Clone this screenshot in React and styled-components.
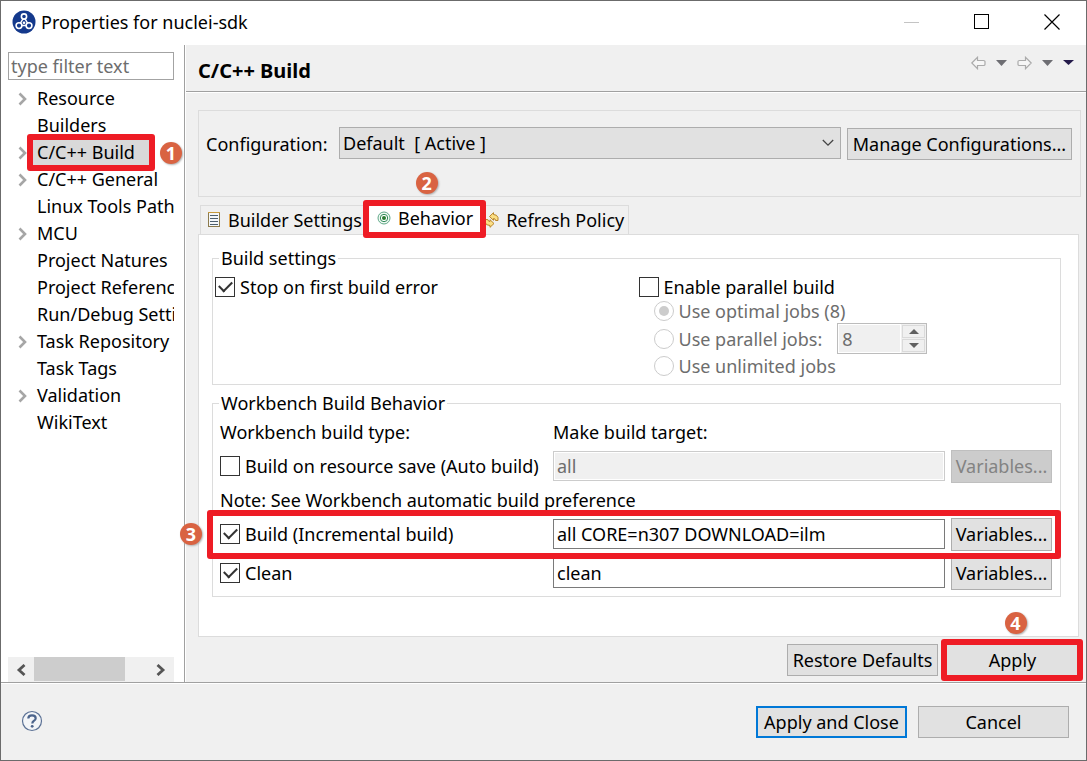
import React from "react";
import styled, { createGlobalStyle, css } from "styled-components";

const Global = createGlobalStyle`
  *, *::before, *::after { box-sizing: border-box; }
  body { margin: 0; background: #f0f0f0; }
  body, button, input, select {
    font-family: "Noto Sans", "Open Sans", sans-serif;
    font-size: 18px;
    line-height: 24px;
    color: #000;
  }
`;

const Window = styled.div`
  display: flex;
  flex-direction: column;
  min-height: 100vh;
  border: 1px solid #6b6b6b;
  background: #f0f0f0;
`;

const TitleBar = styled.header`
  display: flex;
  align-items: center;
  height: 44px;
  padding: 0 26px 2px 11px;
  background: #fff;
`;

const WindowTitle = styled.h1`
  flex: 1;
  margin: 0 0 0 5px;
  font-size: 18px;
  font-weight: 400;
  line-height: 24px;
`;

const WindowControls = styled.div`
  display: flex;
  gap: 54px;
`;

const IconButton = styled.button`
  display: flex;
  align-items: center;
  justify-content: center;
  padding: 0;
  border: 0;
  background: none;
`;

const Body = styled.div`
  display: flex;
  flex: 1;
  border-bottom: 1px solid #a0a0a0;
`;

const Sidebar = styled.nav`
  display: flex;
  flex-direction: column;
  flex: none;
  width: 184px;
  padding: 7px 10px 0 7px;
  border-right: 1px solid #a0a0a0;
  background: #fff;
`;

const FilterInput = styled.input`
  width: 100%;
  height: 28px;
  margin-bottom: 5px;
  padding: 0 2px;
  border: 1px solid #a3a3a3;
  &::placeholder { color: #6d6d6d; opacity: 1; }
`;

const Tree = styled.ul`
  flex: 1;
  margin: 0;
  padding: 0;
  list-style: none;
`;

const TreeItem = styled.li`
  display: flex;
  align-items: center;
  height: 27px;
`;

const TreeArrow = styled.span`
  display: flex;
  flex: none;
  width: 25px;
  padding-left: 9px;
`;

const TreeLink = styled.a`
  display: block;
  flex: 1;
  min-width: 0;
  padding: 1px ${(p) => (p.$selected ? 14 : 0)}px 2px 4px;
  overflow: hidden;
  white-space: nowrap;
  color: #000;
  text-decoration: none;
  background: ${(p) => (p.$selected ? "#d9d9d9" : "transparent")};
`;

const ScrollBar = styled.div`
  display: flex;
  align-items: center;
  height: 25px;
  padding: 0 8px;
  background: #f0f0f0;
`;

const ScrollTrack = styled.div`
  flex: 1;
  height: 100%;
  padding-right: 31px;
  margin-left: 8px;
`;

const ScrollThumb = styled.div`
  height: 24px;
  background: #cdcdcd;
`;

/* Annotation frame and its numbered badge, drawn over the control they mark. */
const Marked = styled.div`
  position: relative;
  &::after {
    content: "";
    position: absolute;
    z-index: 2;
    inset: ${(p) => p.$inset};
    border: 6px solid #ee1c25;
    border-radius: 3px;
    pointer-events: none;
  }
`;

const Badge = styled.span`
  position: absolute;
  z-index: 3;
  display: flex;
  align-items: center;
  justify-content: center;
  width: 22px;
  height: 22px;
  border-radius: 50%;
  background: #d96342;
  box-shadow: 1px 1px 2px #b0b0b0;
  color: #fff;
  font-size: 18px;
  font-weight: 700;
  line-height: 22px;
  ${(p) => p.$place}
`;

const besideRight = css`left: calc(100% + 11px); top: 3px;`;
const above = css`left: calc(50% - 8px); top: -34px;`;
const besideLeft = css`left: -40px; top: 6px;`;
const aboveButton = css`left: calc(50% - 8px); top: -32px;`;

const Page = styled.main`
  display: flex;
  flex: 1;
  flex-direction: column;
  min-width: 0;
  border-left: 1px solid #fff;
`;

const PageHeader = styled.div`
  display: flex;
  align-items: center;
  height: 47px;
  padding: 5px 12px 0 12px;
  border-bottom: 1px solid #a0a0a0;
  box-shadow: 0 1px #fff;
`;

const PageTitle = styled.h2`
  flex: 1;
  margin: 0;
  font-size: 20px;
  font-weight: 700;
  line-height: 24px;
`;

const History = styled.div`
  display: flex;
  gap: 10px;
  padding-bottom: 16px;
`;

const PageContent = styled.div`
  display: flex;
  flex: 1;
  flex-direction: column;
  padding: 18px 5px 6px 12px;
`;

const ConfigBox = styled.div`
  display: flex;
  gap: 6px;
  height: 87px;
  padding: 16px 8px 0 7px;
  border: 1px solid #dcdcdc;
`;

const ConfigLabel = styled.label`
  flex: none;
  width: 127px;
  padding-top: 5px;
  white-space: nowrap;
`;

const SelectWrap = styled.div`
  position: relative;
  flex: 1;
  min-width: 0;
  svg {
    position: absolute;
    right: 7px;
    top: 12px;
    pointer-events: none;
  }
`;

const Select = styled.select`
  appearance: none;
  width: 100%;
  height: 32px;
  padding: 0 28px 0 3px;
  border: 1px solid #adadad;
  border-radius: 0;
  background: #e1e1e1;
`;

const Button = styled.button`
  flex: none;
  width: ${(p) => p.$width}px;
  height: ${(p) => p.$height || 32}px;
  padding: 0;
  border: ${(p) => (p.$primary ? "2px solid #0078d7" : "1px solid #adadad")};
  background: #e1e1e1;
  white-space: nowrap;
  &:disabled {
    border-color: #bfbfbf;
    background: #ccc;
    color: #838383;
  }
`;

const ConfigButton = styled(Button)`
  margin-top: 1px;
`;

const Tabs = styled.div`
  display: flex;
  align-self: flex-start;
  height: 29px;
  margin: 8px 0 0 2px;
  border: 1px solid #dcdcdc;
  border-bottom: 0;
`;

const Tab = styled.button`
  display: flex;
  align-items: center;
  gap: 7px;
  height: ${(p) => (p.$active ? 32 : 28)}px;
  padding: ${(p) => p.$pad};
  border: 0;
  background: ${(p) => (p.$active ? "#fff" : "none")};
  white-space: nowrap;
`;

const TabPanel = styled.section`
  flex: 1;
  padding: 9px 17px 0 13px;
  margin-right: 2px;
  border: 1px solid #dcdcdc;
  background: #fff;
`;

const Group = styled.fieldset`
  min-width: 0;
  margin: 0 0 4px;
  padding: ${(p) => p.$pad};
  border: 1px solid #dcdcdc;
`;

const Legend = styled.legend`
  height: 28px;
  margin-left: ${(p) => p.$indent}px;
  padding: 0 2px;
  line-height: 28px;
`;

const SettingsGrid = styled.div`
  display: grid;
  grid-template-columns: 1fr 1fr;
`;

const ParallelOptions = styled.div`
  padding-left: 2px;
`;

const OptionRow = styled.div`
  display: flex;
  align-items: center;
  height: ${(p) => p.$height}px;
  padding-left: ${(p) => p.$indent || 0}px;
`;

const Choice = styled.label`
  display: flex;
  align-items: center;
  gap: 5px;
  white-space: nowrap;
  color: ${(p) => (p.$disabled ? "#6d6d6d" : "#000")};
`;

const CheckBox = styled.input.attrs({ type: "checkbox" })`
  appearance: none;
  position: relative;
  flex: none;
  width: 20px;
  height: 20px;
  margin: 0;
  border: 1px solid #333;
  background: #fff;
  &:checked::before {
    content: "";
    position: absolute;
    left: 3px;
    top: 3px;
    width: 13px;
    height: 8px;
    border: solid #333;
    border-width: 0 0 2px 2px;
    transform: rotate(-45deg);
  }
`;

const Radio = styled.input.attrs({ type: "radio" })`
  appearance: none;
  display: flex;
  flex: none;
  align-items: center;
  justify-content: center;
  width: 20px;
  height: 20px;
  margin: 0;
  border: 1px solid #ccc;
  border-radius: 50%;
  background: #fff;
  &:checked::before {
    content: "";
    width: 10px;
    height: 10px;
    border-radius: 50%;
    background: #ccc;
  }
`;

const Spinner = styled.div`
  display: flex;
  width: 90px;
  height: 31px;
  margin-left: 15px;
  border: 1px solid #bcbcbc;
  background: #f0f0f0;
`;

const SpinnerInput = styled.input`
  flex: 1;
  min-width: 0;
  padding: 0 3px;
  border: 1px solid #fff;
  background: #f0f0f0;
  color: #6d6d6d;
`;

const SpinnerButtons = styled.div`
  display: flex;
  flex-direction: column;
  gap: 1px;
  width: 25px;
  padding: 1px;
`;

const SpinnerButton = styled(IconButton)`
  flex: 1;
  border: 1px solid #dadada;
`;

const Field = styled.input.attrs({ type: "text" })`
  flex: 1;
  min-width: 0;
  height: 30px;
  padding: 0 3px;
  border: 1px solid #7a7a7a;
  background: #fff;
  &:disabled {
    border-color: #ccc;
    background: #f0f0f0;
    box-shadow: inset 0 0 0 1px #fff;
    color: #6d6d6d;
  }
`;

const BuildRow = styled.div`
  display: flex;
  align-items: center;
  height: 34px;
  gap: 6px;
`;

const BuildName = styled.div`
  flex: none;
  width: 327px;
  white-space: nowrap;
`;

const BuildHeader = styled(BuildRow)`
  height: 30px;
  margin-bottom: 2px;
`;

const CleanRow = styled(BuildRow)`
  margin-top: 5px;
`;

const PageActions = styled.div`
  display: flex;
  justify-content: flex-end;
  gap: 6px;
  padding-top: 7px;
`;

const Footer = styled.footer`
  display: flex;
  gap: 11px;
  height: 77px;
  padding: 22px 17px 0 20px;
  border-top: 1px solid #fff;
`;

const HelpButton = styled(IconButton)`
  width: 22px;
  height: 30px;
  margin-right: auto;
`;

const LogoIcon = () => (
  <svg width="24" height="24" viewBox="0 0 24 24" aria-hidden="true">
    <circle cx="12" cy="12" r="11.5" fill="#14398c" />
    <path d="M12 7 7.200 15.500h9.600z" fill="none" stroke="#fff" strokeWidth="1.500" />
    <g fill="#14398c" stroke="#fff" strokeWidth="1.600">
      <circle cx="12" cy="6.500" r="2.600" />
      <circle cx="7" cy="15.600" r="2.900" />
      <circle cx="17" cy="15.600" r="2.900" />
    </g>
    <circle cx="12" cy="12.800" r="1.300" fill="#fff" />
  </svg>
);

const TreeChevron = () => (
  <svg width="12" height="14" viewBox="0 0 12 14" aria-hidden="true">
    <path d="M2.5 1.5 8 7l-5.500 5.500" fill="none" stroke="#a6a6a6" strokeWidth="2.600" />
  </svg>
);

const ScrollChevron = ({ left }) => (
  <svg width="10" height="12" viewBox="0 0 10 12" aria-hidden="true">
    <path
      d={left ? "M8.500 1 3 6l5.500 5" : "M1.500 1 7 6l-5.500 5"}
      fill="none"
      stroke="#555"
      strokeWidth="2.800"
    />
  </svg>
);

const HistoryArrow = ({ back }) => (
  <svg width="15" height="14" viewBox="0 0 15 14" aria-hidden="true">
    <path
      d={
        back
          ? "M.8 7 6.500 1.300V4.500H12.500q1.500 0 1.500 1V8.500q0 1-1.500 1H6.500V12.700Z"
          : "M14.200 7 8.500 1.300V4.500H2.500Q1 4.500 1 5.500V8.500q0 1 1.500 1H8.500V12.700Z"
      }
      fill="#f6f6f6"
      stroke="#ababab"
      strokeWidth="1.200"
    />
  </svg>
);

const Caret = ({ width = 11, height = 6, color = "#6e6e73", up }) => (
  <svg width={width} height={height} viewBox="0 0 10 6" preserveAspectRatio="none" aria-hidden="true">
    <path d={up ? "M0 6h10L5 0z" : "M0 0h10L5 6z"} fill={color} />
  </svg>
);

const ListIcon = () => (
  <svg width="14" height="16" viewBox="0 0 14 16" aria-hidden="true">
    <rect x="1.500" y=".5" width="11" height="14" fill="#f4f7fa" stroke="#8c7a4c" />
    <path d="M1 .5h12" stroke="#c79a3c" />
    <path d="M3 3.500h8M3 6.500h8M3 9.500h8M3 12.500h8" stroke="#4d5f6e" />
  </svg>
);

const TargetIcon = () => (
  <svg width="14" height="14" viewBox="0 0 14 14" aria-hidden="true">
    <circle cx="7" cy="7" r="6" fill="#f2faf4" stroke="#5fa888" />
    <circle cx="7" cy="7" r="3.700" fill="#fff" stroke="#2f8a58" />
    <circle cx="7" cy="7" r="2" fill="#2a7a32" />
  </svg>
);

const RefreshIcon = () => (
  <svg width="15" height="16" viewBox="0 0 15 16" aria-hidden="true">
    <g fill="#fbdf86" stroke="#b98428" strokeWidth="1" strokeLinejoin="round">
      <path d="M5.500 4.500 9.500.7V2.500Q13 2.500 14 5.500V8.500H11.500Q11.500 6.500 9.500 6.500V8.300Z" />
      <path d="M10 11.500 6 7.700V9.500Q4 9.500 3.800 7.500H1V10Q1.500 13.500 6 13.500V15.300Z" />
    </g>
  </svg>
);

const HelpIcon = () => (
  <svg width="22" height="22" viewBox="0 0 22 22" aria-hidden="true">
    <circle cx="11" cy="11" r="9.500" fill="#f3f5f8" stroke="#5b7195" strokeWidth="1.200" />
    <path
      d="M7.300 8.500Q7.300 5.300 11 5.300T14.700 8.300Q14.700 10 12.700 11Q11.300 11.800 11.300 13.500"
      fill="none"
      stroke="#4c648c"
      strokeWidth="2.200"
    />
    <circle cx="11.200" cy="16.300" r="1.400" fill="#4c648c" />
  </svg>
);

const treeItems = [
  { name: "Resource", branch: true },
  { name: "Builders" },
  { name: "C/C++ Build", branch: true, selected: true },
  { name: "C/C++ General", branch: true },
  { name: "Linux Tools Path" },
  { name: "MCU", branch: true },
  { name: "Project Natures" },
  { name: "Project References" },
  { name: "Run/Debug Settings" },
  { name: "Task Repository", branch: true },
  { name: "Task Tags" },
  { name: "Validation", branch: true },
  { name: "WikiText" },
];

function Navigation() {
  return (
    <Sidebar aria-label="Property pages">
      <FilterInput type="text" placeholder="type filter text" aria-label="Filter" />
      <Tree>
        {treeItems.map(({ name, branch, selected }) => (
          <TreeItem key={name}>
            <TreeArrow>{branch && <TreeChevron />}</TreeArrow>
            {selected ? (
              <Marked $inset="-5px -6px -5px -6px">
                <TreeLink href="#build" $selected aria-current="page">
                  {name}
                </TreeLink>
                <Badge $place={besideRight}>1</Badge>
              </Marked>
            ) : (
              <TreeLink href="#page">{name}</TreeLink>
            )}
          </TreeItem>
        ))}
      </Tree>
      <ScrollBar>
        <ScrollChevron left />
        <ScrollTrack>
          <ScrollThumb />
        </ScrollTrack>
        <ScrollChevron />
      </ScrollBar>
    </Sidebar>
  );
}

function BuildSettings() {
  return (
    <Group $pad="3px 2px 6px">
      <Legend $indent={4}>Build settings</Legend>
      <SettingsGrid>
        <OptionRow $height={24}>
          <Choice>
            <CheckBox defaultChecked />
            Stop on first build error
          </Choice>
        </OptionRow>
        <ParallelOptions>
          <OptionRow $height={24}>
            <Choice>
              <CheckBox />
              Enable parallel build
            </Choice>
          </OptionRow>
          <OptionRow $height={24} $indent={15}>
            <Choice $disabled>
              <Radio name="jobs" defaultChecked disabled />
              Use optimal jobs (8)
            </Choice>
          </OptionRow>
          <OptionRow $height={31} $indent={15}>
            <Choice $disabled>
              <Radio name="jobs" disabled />
              Use parallel jobs:
            </Choice>
            <Spinner>
              <SpinnerInput type="text" defaultValue="8" aria-label="Parallel jobs" disabled />
              <SpinnerButtons>
                <SpinnerButton aria-label="Increase" disabled>
                  <Caret up width={10} height={5} color="#606060" />
                </SpinnerButton>
                <SpinnerButton aria-label="Decrease" disabled>
                  <Caret width={10} height={5} color="#606060" />
                </SpinnerButton>
              </SpinnerButtons>
            </Spinner>
          </OptionRow>
          <OptionRow $height={24} $indent={15}>
            <Choice $disabled>
              <Radio name="jobs" disabled />
              Use unlimited jobs
            </Choice>
          </OptionRow>
        </ParallelOptions>
      </SettingsGrid>
    </Group>
  );
}

function BuildTarget({ label, value, checked, disabled }) {
  return (
    <>
      <BuildName>
        <Choice>
          <CheckBox defaultChecked={checked} />
          {label}
        </Choice>
      </BuildName>
      <Field defaultValue={value} disabled={disabled} aria-label={`${label} target`} />
      <Button $width={101} $height={33} disabled={disabled}>
        Variables...
      </Button>
    </>
  );
}

function WorkbenchBehavior() {
  return (
    <Group $pad="0 8px 6px 7px">
      <Legend $indent={-1}>Workbench Build Behavior</Legend>
      <BuildHeader>
        <BuildName>Workbench build type:</BuildName>
        <span>Make build target:</span>
      </BuildHeader>
      <BuildRow>
        <BuildTarget label="Build on resource save (Auto build)" value="all" disabled />
      </BuildRow>
      <BuildRow>Note: See Workbench automatic build preference</BuildRow>
      <Marked $inset="-7px -9px -8px -13px">
        <BuildRow>
          <BuildTarget label="Build (Incremental build)" value="all CORE=n307 DOWNLOAD=ilm" checked />
        </BuildRow>
        <Badge $place={besideLeft}>3</Badge>
      </Marked>
      <CleanRow>
        <BuildTarget label="Clean" value="clean" checked />
      </CleanRow>
    </Group>
  );
}

export default function App() {
  return (
    <>
      <Global />
      <Window>
        <TitleBar>
          <LogoIcon />
          <WindowTitle>Properties for nuclei-sdk</WindowTitle>
          <WindowControls>
            <IconButton aria-label="Minimize">
              <svg width="16" height="16" viewBox="0 0 16 16">
                <path d="M0 8.500h15" stroke="#c4c4c4" />
              </svg>
            </IconButton>
            <IconButton aria-label="Maximize">
              <svg width="16" height="16" viewBox="0 0 16 16">
                <rect x=".5" y=".5" width="14" height="14" fill="none" stroke="#000" />
              </svg>
            </IconButton>
            <IconButton aria-label="Close">
              <svg width="16" height="16" viewBox="0 0 16 16">
                <path d="M.5.5l15 15M15.500.5l-15 15" stroke="#000" strokeWidth="1.200" />
              </svg>
            </IconButton>
          </WindowControls>
        </TitleBar>
        <Body>
          <Navigation />
          <Page>
            <PageHeader>
              <PageTitle>C/C++ Build</PageTitle>
              <History>
                <IconButton aria-label="Back"><HistoryArrow back /></IconButton>
                <IconButton aria-label="Back history"><Caret /></IconButton>
                <IconButton aria-label="Forward"><HistoryArrow /></IconButton>
                <IconButton aria-label="Forward history"><Caret /></IconButton>
                <IconButton aria-label="Menu"><Caret height={5} color="#241a4a" /></IconButton>
              </History>
            </PageHeader>
            <PageContent>
              <ConfigBox>
                <ConfigLabel htmlFor="configuration">Configuration:</ConfigLabel>
                <SelectWrap>
                  <Select id="configuration">
                    <option>{"Default\u00a0 [ Active ]"}</option>
                  </Select>
                  <svg width="12" height="8" viewBox="0 0 12 8" aria-hidden="true">
                    <path d="M.8 1 6 6.200 11.200 1" fill="none" stroke="#444" strokeWidth="1.300" />
                  </svg>
                </SelectWrap>
                <ConfigButton $width={225}>Manage Configurations...</ConfigButton>
              </ConfigBox>
              <Tabs role="tablist">
                <Tab role="tab" $pad="0 1px 0 6px"><ListIcon />Builder Settings</Tab>
                <Marked $inset="-6px -2px -4px 0">
                  <Tab role="tab" $active aria-selected="true" $pad="0 11px 8px 14px">
                    <TargetIcon />Behavior
                  </Tab>
                  <Badge $place={above}>2</Badge>
                </Marked>
                <Tab role="tab" $pad="0 4px 0 0"><RefreshIcon />Refresh Policy</Tab>
              </Tabs>
              <TabPanel role="tabpanel">
                <BuildSettings />
                <WorkbenchBehavior />
              </TabPanel>
              <PageActions>
                <Button $width={151}>Restore Defaults</Button>
                <Marked $inset="-5px -2px -5px -3px">
                  <Button $width={137}>Apply</Button>
                  <Badge $place={aboveButton}>4</Badge>
                </Marked>
              </PageActions>
            </PageContent>
          </Page>
        </Body>
        <Footer>
          <HelpButton aria-label="Help"><HelpIcon /></HelpButton>
          <Button $width={151} $primary>Apply and Close</Button>
          <Button $width={151}>Cancel</Button>
        </Footer>
      </Window>
    </>
  );
}
